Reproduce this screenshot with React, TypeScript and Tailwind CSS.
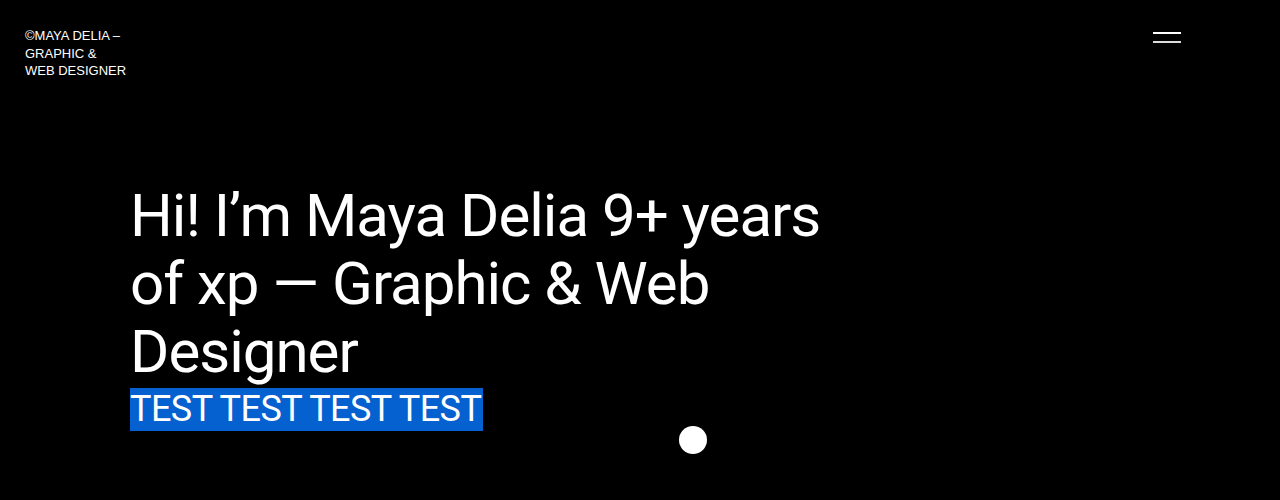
import React from "react";

const App = () => {
  return (
    <div className="relative h-[500px] w-full overflow-hidden bg-black text-white">
      <header className="flex items-start justify-between pl-[25px] pr-[99px] pt-[27px]">
        <p className="font-['Liberation_Sans',Arial,sans-serif] text-[13px] leading-[17.5px] uppercase">
          ©Maya Delia –
          <br />
          Graphic &amp;
          <br />
          Web Designer
        </p>
        <button className="mt-[5px] flex w-[28px] flex-col gap-[7px]" aria-label="Menu">
          <span className="block h-[2px] w-full bg-white" />
          <span className="block h-[2px] w-full bg-[#dcdcdc]" />
        </button>
      </header>

      <main className="pl-[130px] pt-[102px]">
        <h1 className="w-[720px] font-['Roboto',sans-serif] text-[60px] leading-[68px] tracking-[-1px] font-normal">
          Hi! I’m Maya Delia 9+ years of xp — Graphic &amp; Web Designer
        </h1>
        <p className="mt-[2px] inline-block h-[43px] bg-[#0560d0] pr-[2px] font-['Roboto',sans-serif] text-[36px] leading-[43px] tracking-[-0.55px]">
          TEST TEST TEST TEST
        </p>
      </main>

      <div className="absolute left-[679px] top-[426px] h-[28px] w-[28px] rounded-full bg-white" />
    </div>
  );
};

export default App;
